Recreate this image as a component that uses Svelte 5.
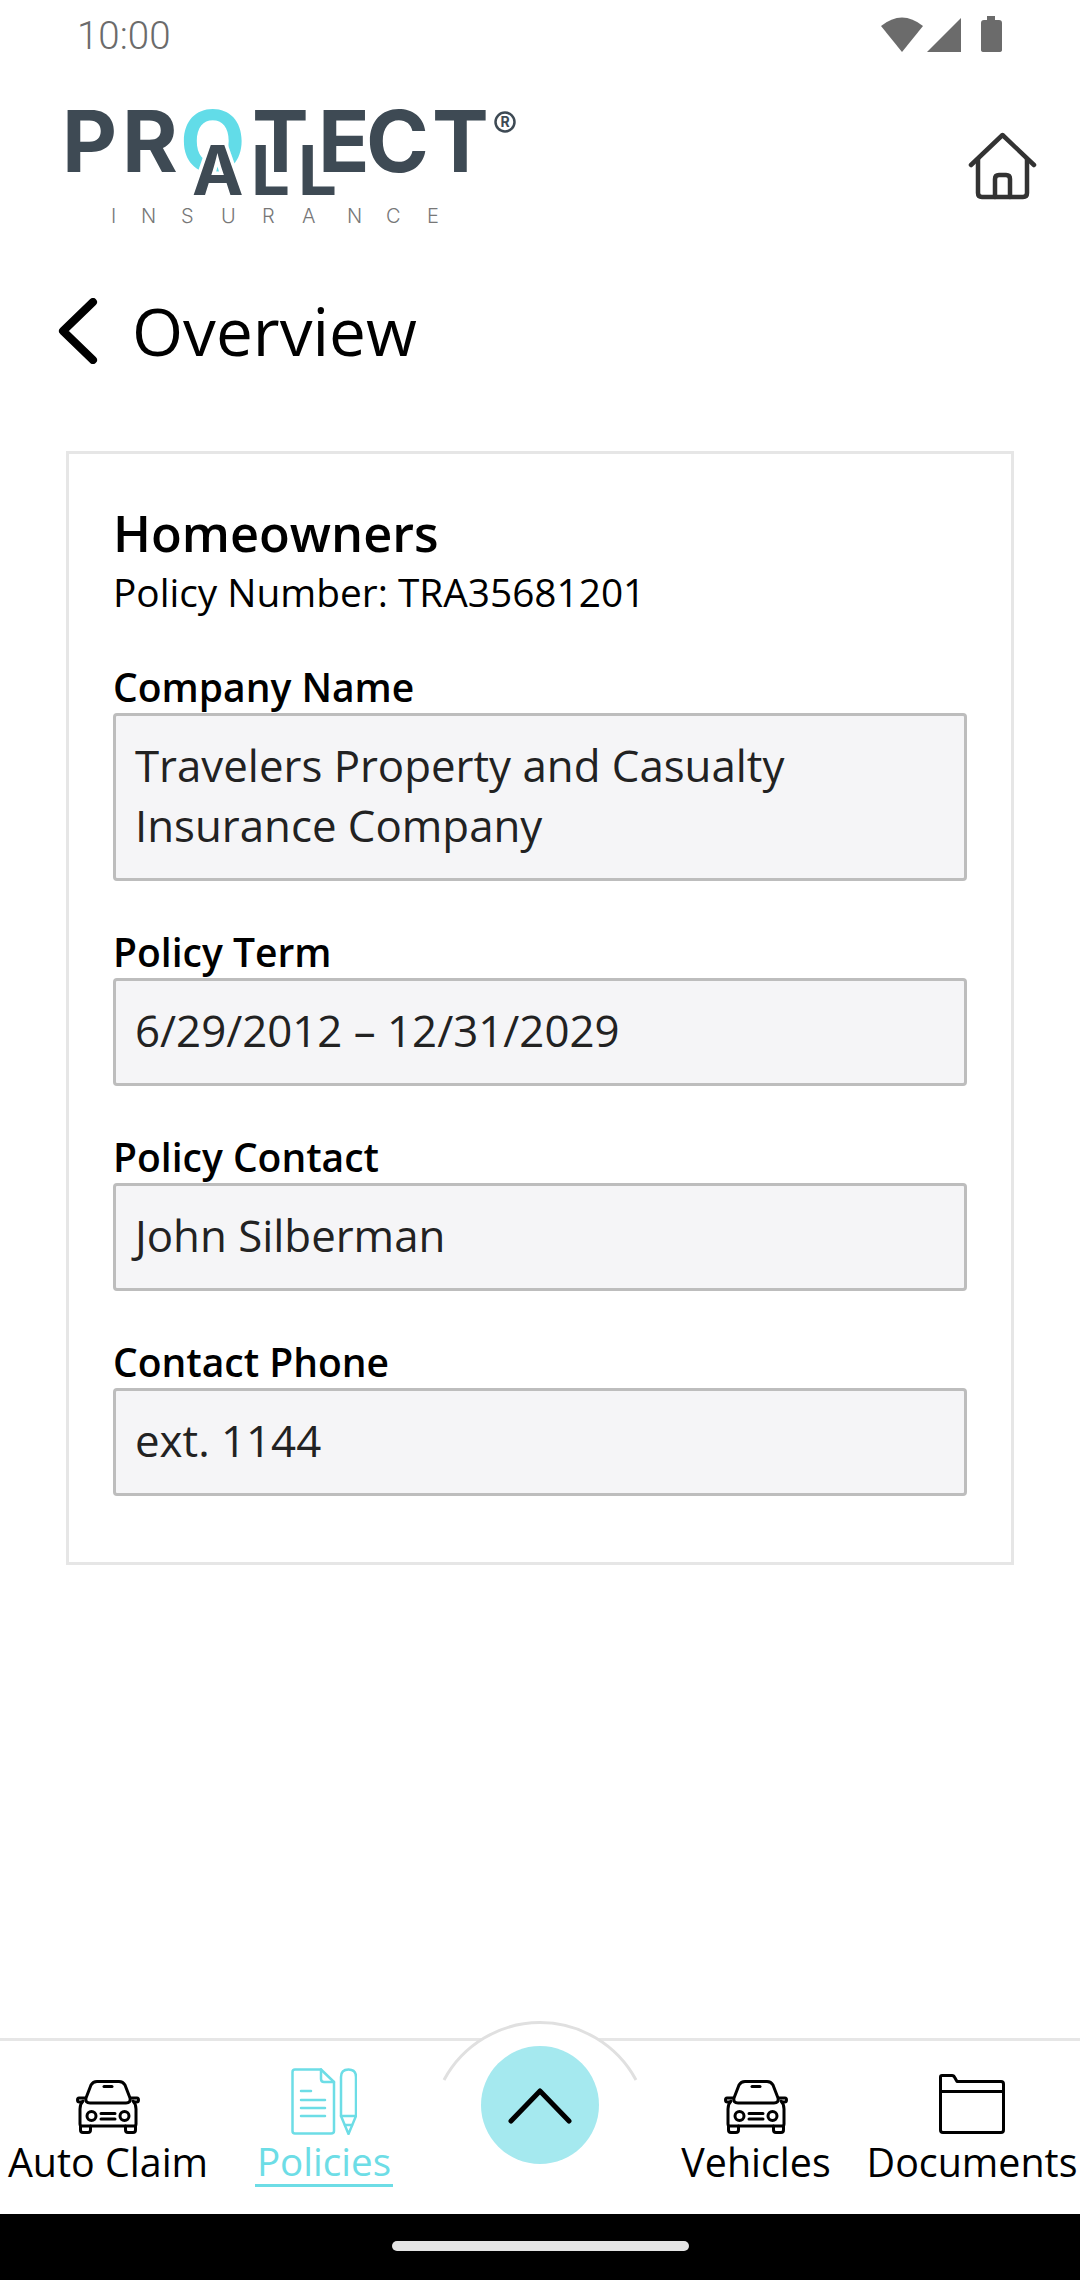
<script>
  const fields = [
    { label: 'Company Name', value: 'Travelers Property and Casualty Insurance Company' },
    { label: 'Policy Term', value: '6/29/2012 – 12/31/2029' },
    { label: 'Policy Contact', value: 'John Silberman' },
    { label: 'Contact Phone', value: 'ext. 1144' }
  ];
</script>

{#snippet car()}
  <svg class="nav-icon" width="64" height="54" viewBox="0 0 64 54" fill="none" stroke="currentColor" stroke-width="3" stroke-linecap="round" stroke-linejoin="round">
    <path d="M10 18 L15 5 Q17 1.500 21 1.500 H43 Q47 1.500 49 5 L54 18 Q55 23 50 23 H14 Q9 23 10 18 Z" />
    <path d="M28 6.500 H36" />
    <path d="M9 18 H3 Q1.500 18 1.500 20 Q1.500 22 3.500 22 H6 M55 18 H61 Q62.500 18 62.500 20 Q62.500 22 60.500 22 H58" />
    <path d="M7 21 Q4 24 4 29 V44 Q4 46 6 46 H58 Q60 46 60 44 V29 Q60 24 57 21" />
    <path d="M4.500 46 V50 Q4.500 52.500 7 52.500 H12 Q14.500 52.500 14.500 50 V46 M49.500 46 V50 Q49.500 52.500 52 52.500 H57 Q59.500 52.500 59.500 50 V46" />
    <circle cx="15.500" cy="36" r="4.500" />
    <circle cx="48.500" cy="36" r="4.500" />
    <path d="M25 33.500 H39 M25 39 H39" />
  </svg>
{/snippet}

<main class="screen">
  <div class="status-bar">
    <span class="time">10:00</span>
    <svg width="122" height="38" viewBox="0 0 122 38" fill="#6b6b6b">
      <path d="M0 11 Q21 -6 42 11 L21 37 Z" />
      <path d="M46 37 L80 3 V37 Z" />
      <path d="M106 1 H114 V5 H118 Q121 5 121 8 V35 Q121 37 118 37 H103 Q100 37 100 35 V8 Q100 5 103 5 H106 Z" />
    </svg>
  </div>

  <header class="top-bar">
    <svg class="logo" width="460" height="130" viewBox="0 0 460 130">
      <text class="word" x="2 62 120 192 258 306 372" y="72">PR<tspan class="accent">O</tspan>TECT</text>
      <text class="word small knock" x="132" y="95">A</text>
      <text class="word small" x="191 238" y="95">LL</text>
      <text class="tagline" x="51 81 121 161 202 242 287 326 367" y="123">INSURANCE</text>
      <circle class="reg" cx="445" cy="22" r="9.500" />
      <text class="reg-r" x="445" y="27">R</text>
    </svg>
    <svg class="home" width="70" height="70" viewBox="0 0 70 70" fill="none" stroke="#333" stroke-width="4.500" stroke-linecap="round" stroke-linejoin="round">
      <path d="M3 34 L34.500 4 L66 34" />
      <path d="M10 28 V62 Q10 66 14 66 H55 Q59 66 59 62 V28" />
      <path d="M27 66 V48 Q27 44 31 44 H38 Q42 44 42 48 V66" />
    </svg>
  </header>

  <div class="title-row">
    <svg width="40" height="66" viewBox="0 0 40 66" fill="none" stroke="#000" stroke-width="8" stroke-linecap="round" stroke-linejoin="round">
      <path d="M35 4 L5 33 L35 62" />
    </svg>
    <h1>Overview</h1>
  </div>

  <section class="card">
    <h2>Homeowners</h2>
    <p class="policy-no">Policy Number: TRA35681201</p>

    <div class="fields">
      {#each fields as field}
        <div>
          <div class="label">{field.label}</div>
          <div class="value">{field.value}</div>
        </div>
      {/each}
    </div>
  </section>

  <div class="spacer"></div>

  <nav class="bottom-nav">
    <svg class="fab-arc" width="220" height="70" viewBox="0 0 220 70">
      <path d="M14 59 A109 109 0 0 1 206 59 V70 H14 Z" fill="#fff" />
      <path d="M14 59 A109 109 0 0 1 206 59" fill="none" stroke="#e0e0e0" stroke-width="3" />
    </svg>

    <a class="nav-item">
      {@render car()}
      <span>Auto Claim</span>
    </a>

    <a class="nav-item active">
      <svg class="nav-icon" width="66" height="67" viewBox="0 0 66 67" fill="none" stroke="currentColor" stroke-width="2.500" stroke-linecap="round" stroke-linejoin="round">
        <path d="M30 1.500 H4 Q1.500 1.500 1.500 4 V63 Q1.500 65.500 4 65.500 H40 Q43 65.500 43 63 V14 Z" />
        <path d="M30 1.500 V11 Q30 14 33 14 H43" />
        <path d="M10 23 H20 M10 32 H34 M10 40 H34 M10 48 H34" />
        <path d="M50 48 V9 Q50 1.500 57.500 1.500 Q65 1.500 65 9 V48 L57.500 66 L50 48 Z" />
        <path d="M50 48 H65 M54 57 H61" />
      </svg>
      <span>Policies</span>
    </a>

    <div class="fab-slot">
      <button class="fab" aria-label="Expand">
        <svg width="64" height="38" viewBox="0 0 64 38" fill="none" stroke="#000" stroke-width="5" stroke-linecap="round" stroke-linejoin="round">
          <path d="M3 35 L32 5 L61 35" />
        </svg>
      </button>
    </div>

    <a class="nav-item">
      {@render car()}
      <span>Vehicles</span>
    </a>

    <a class="nav-item">
      <svg class="nav-icon" width="66" height="60" viewBox="0 0 66 60" fill="none" stroke="currentColor" stroke-width="3" stroke-linecap="round" stroke-linejoin="round">
        <path d="M3 1.500 H13 Q15 1.500 16 4 L18 7.500 H62 Q64.500 7.500 64.500 10 V56 Q64.500 58.500 62 58.500 H4 Q1.500 58.500 1.500 56 V3 Q1.500 1.500 3 1.500 Z" />
        <path d="M1.500 17.500 H64.500" />
      </svg>
      <span>Documents</span>
    </a>
  </nav>

  <div class="gesture-bar">
    <div class="handle"></div>
  </div>
</main>

<style>
  :global(body) {
    margin: 0;
    background: white;
    font-family: "Open Sans", Arial, sans-serif;
    color: #000;
  }

  .screen {
    height: 2280px;
    display: flex;
    flex-direction: column;
    overflow: hidden;
    background: white;
  }

  .status-bar {
    height: 70px;
    flex: none;
    display: flex;
    justify-content: space-between;
    align-items: flex-start;
    padding: 15px 77px 0 77px;
    box-sizing: border-box;
  }

  .time {
    font-family: Roboto, sans-serif;
    font-size: 38.500px;
    font-weight: 300;
    line-height: 42px;
    color: #6b6b6b;
  }

  .top-bar {
    height: 162px;
    flex: none;
    display: flex;
    justify-content: space-between;
    align-items: flex-start;
    padding: 30px 42px 0 60px;
    box-sizing: border-box;
  }

  .logo {
    overflow: visible;
  }

  .logo text {
    font-family: Inter, "Open Sans", sans-serif;
  }

  .word {
    font-size: 85px;
    font-weight: 700;
    fill: #3e4a54;
  }

  .accent {
    fill: #62dce8;
  }

  .word.small {
    font-size: 69px;
  }

  .knock {
    stroke: #fff;
    stroke-width: 7px;
    paint-order: stroke;
  }

  .tagline {
    font-size: 20px;
    font-weight: 300;
    fill: #777;
  }

  .reg {
    fill: none;
    stroke: #3e4a54;
    stroke-width: 2.500;
  }

  .reg-r {
    font-size: 14px;
    font-weight: 700;
    fill: #3e4a54;
    text-anchor: middle;
  }

  .home {
    margin-top: 31px;
  }

  .title-row {
    display: flex;
    align-items: center;
    gap: 34px;
    height: 90px;
    flex: none;
    padding-left: 58px;
    margin-top: 54px;
  }

  h1 {
    margin: 0;
    font-size: 65.700px;
    font-weight: 400;
    line-height: 90px;
  }

  .card {
    flex: none;
    margin: 75px 66px 0;
    padding: 48px 44px 66px;
    border: 3px solid #e6e6e6;
  }

  h2 {
    margin: 0;
    font-size: 50.500px;
    font-weight: 600;
    line-height: 62px;
  }

  .policy-no {
    margin: 0 0 43px;
    font-size: 38.800px;
    line-height: 56px;
  }

  .fields {
    display: flex;
    flex-direction: column;
    gap: 47px;
  }

  .label {
    font-size: 39px;
    font-weight: 600;
    line-height: 47px;
    padding-bottom: 3px;
  }

  .value {
    padding: 19px 19px 23px;
    background: #f5f5f7;
    border: 3px solid #bdbdbd;
    border-radius: 4px;
    font-size: 43.800px;
    line-height: 60px;
    color: #222;
  }

  .spacer {
    flex: 1;
  }

  .bottom-nav {
    position: relative;
    height: 176px;
    flex: none;
    display: grid;
    grid-template-columns: repeat(5, 216px);
    border-top: 3px solid #e6e6e6;
    box-sizing: border-box;
  }

  .fab-arc {
    position: absolute;
    left: 430px;
    top: -20px;
  }

  .nav-item {
    position: relative;
    height: 120px;
    margin-top: 26px;
    display: flex;
    flex-direction: column;
    align-items: center;
    justify-content: flex-end;
    color: #000;
    white-space: nowrap;
    font-size: 39.400px;
    line-height: 50px;
  }

  .nav-icon {
    flex: none;
    margin-bottom: 3px;
  }

  .nav-item.active {
    color: #6ddde6;
  }

  .nav-item.active span {
    border-bottom: 3px solid #6ddde6;
    font-size: 38.600px;
    line-height: 46px;
    padding: 0 2px;
  }

  .fab-slot {
    position: relative;
    display: flex;
    justify-content: center;
  }

  .fab {
    width: 118px;
    height: 118px;
    margin-top: 5px;
    padding: 0;
    border: none;
    border-radius: 50%;
    background: #a5e9ef;
    display: flex;
    align-items: center;
    justify-content: center;
  }

  .gesture-bar {
    height: 66px;
    flex: none;
    background: #000;
    display: flex;
    justify-content: center;
    padding-top: 27px;
    box-sizing: border-box;
  }

  .handle {
    width: 297px;
    height: 10px;
    border-radius: 5px;
    background: #e4e4e4;
  }
</style>
